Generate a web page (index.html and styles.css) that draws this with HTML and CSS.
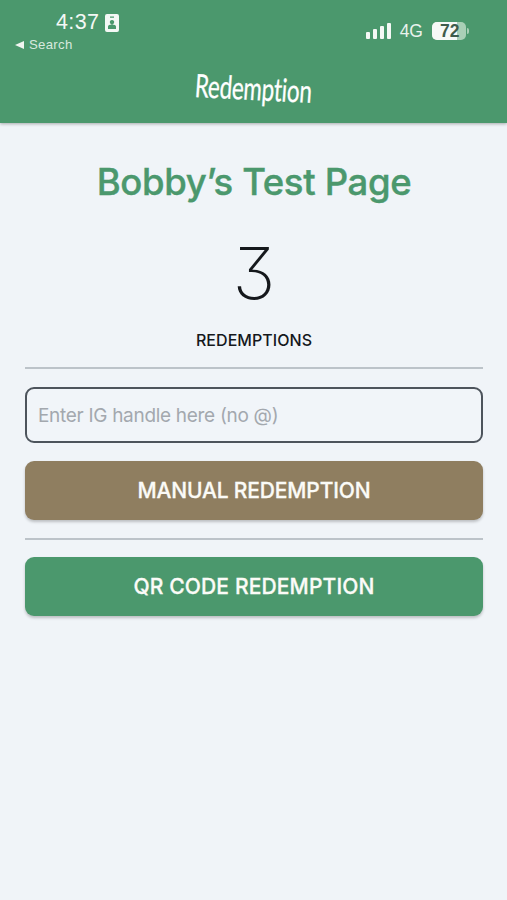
FILE: index.html
```html
<!DOCTYPE html>
<html lang="en">
<head>
<meta charset="utf-8">
<title>Redemption</title>
<link rel="stylesheet" href="styles.css">
</head>
<body>
<header class="header">
  <div class="status">
    <div class="status-left">
      <div class="time-row">
        <span class="time">4:37</span>
        <svg class="id-icon" width="14" height="18" viewBox="0 0 14 18"><path fill-rule="evenodd" fill="#f4f8f5" d="M2 0h10a2 2 0 0 1 2 2v14a2 2 0 0 1-2 2H2a2 2 0 0 1-2-2V2a2 2 0 0 1 2-2zM5 2.500v1.200h4V2.500zM7 6a2.200 2.200 0 1 0 .01 0zM3 15h8v-2.500c0-1.300-1.500-2-4-2s-4 .7-4 2z"/></svg>
      </div>
      <div class="back"><span class="back-arrow"></span><span>Search</span></div>
    </div>
    <div class="status-right">
      <svg class="signal" width="26" height="16" viewBox="0 0 26 16"><rect x="0" y="9" width="4" height="7" rx="1"/><rect x="7" y="6" width="4" height="10" rx="1"/><rect x="14" y="3" width="4" height="13" rx="1"/><rect x="21" y="0" width="4" height="16" rx="1"/></svg>
      <span class="net">4G</span>
      <span class="battery"><span class="battery-fill"></span><span class="battery-num">72</span></span>
      <span class="battery-cap"></span>
    </div>
  </div>
  <h1 class="title">Redemption</h1>
</header>
<main class="content">
  <h2 class="page-name">Bobby’s Test Page</h2>
  <div class="count">3</div>
  <div class="count-label">REDEMPTIONS</div>
  <hr class="rule rule-top">
  <input class="handle" type="text" placeholder="Enter IG handle here (no @)">
  <button class="btn btn-brown">MANUAL REDEMPTION</button>
  <hr class="rule rule-mid">
  <button class="btn btn-green">QR CODE REDEMPTION</button>
</main>
</body>
</html>
```
FILE: styles.css
```css
* { box-sizing: border-box; }
html, body { margin: 0; height: 100%; }
body {
  background: #f0f4f8;
  font-family: Inter, "Liberation Sans", sans-serif;
  color: #15181c;
  overflow: hidden;
}
.header {
  height: 123px;
  background: #4b986d;
  box-shadow: 0 1px 3px rgba(0,0,0,.3);
  padding: 12px 38px 0 15px;
  color: #f4f8f5;
  display: flex;
  flex-direction: column;
}
.status { display: flex; justify-content: space-between; align-items: flex-start; height: 42px; }
.status-left { display: flex; flex-direction: column; }
.time-row { display: flex; align-items: center; gap: 6px; padding-left: 41px; height: 21px; }
.time { font: 500 21.500px/21px "Liberation Sans", sans-serif; letter-spacing: .4px; }
.id-icon { display: block; }
.back { display: flex; align-items: center; gap: 5px; height: 16px; margin-top: 4px; font: 500 13.200px/16px "Liberation Sans", sans-serif; color: #d8e9de; letter-spacing: .3px; }
.back-arrow { width: 0; height: 0; border-style: solid; border-width: 4px 9px 4px 0; border-color: transparent #f0f5f1 transparent transparent; }
.status-right { display: flex; align-items: center; margin-top: 10px; height: 18px; }
.signal { fill: #f4f8f5; display: block; }
.net { font: 400 17.500px/18px "Liberation Sans", sans-serif; margin-left: 8px; color: #e9f2ec; }
.battery { position: relative; display: block; width: 34px; height: 18px; margin-left: 9px; border-radius: 5px; background: #a9cfb6; overflow: hidden; }
.battery-fill { position: absolute; left: 0; top: 0; bottom: 0; width: 25px; background: #f6f9f7; }
.battery-num { position: absolute; left: 8px; top: 0; font: 700 17.500px/18px "Liberation Sans", sans-serif; color: #3e5c4c; }
.battery-cap { width: 2px; height: 6px; margin-left: 1px; border-radius: 0 2px 2px 0; background: #a9cfb6; }
.title {
  margin: 14px 0 0;
  align-self: center;
  transform: translateX(11px) scaleX(.7) rotate(2deg) skewX(-4deg);
  font: 400 32px/40px Lato, sans-serif;
  color: #fff;
  letter-spacing: -.3px;
  -webkit-text-stroke: .3px #fff;
}
.content { padding: 0 24px 0 25px; display: flex; flex-direction: column; }
.page-name {
  margin: 37px 0 0;
  text-align: center;
  font: 500 36.500px/44px Inter, sans-serif;
  letter-spacing: -.35px;
  color: #4b986d;
  -webkit-text-stroke: .4px #4b986d;
}
.count {
  margin-top: 33px;
  height: 72px;
  text-align: center;
  font: 200 72px/72px Inter, sans-serif;
  font-feature-settings: "cv09";
  color: #15181c;
}
.count-label {
  margin-top: 21px;
  text-align: center;
  font: 500 16px/20px Inter, sans-serif;
  letter-spacing: .05px;
}
.rule { width: 100%; height: 2px; margin: 0; border: 0; background: #bcc3c9; }
.rule-top { margin-top: 17px; }
.handle {
  display: block;
  margin-top: 18px;
  width: 100%;
  height: 56px;
  padding: 0 11px;
  border: 2px solid #4d545c;
  border-radius: 9px;
  background: #f1f5f9;
  font: 400 19px/24px Inter, sans-serif;
  letter-spacing: -.3px;
  color: #15181c;
}
.handle::placeholder { color: #a3a8ae; opacity: 1; }
.btn {
  display: block;
  width: 100%;
  height: 59px;
  border: 0;
  border-radius: 9px;
  color: #fbfbf7;
  font: 500 21px/26px Inter, sans-serif;
  letter-spacing: -.15px;
  -webkit-text-stroke: .3px #fbfbf7;
  box-shadow: 0 2px 3px rgba(0,0,0,.22);
}
.btn-brown { margin-top: 18px; background: #8f7e60; }
.btn-green { margin-top: 17px; background: #4b986d; letter-spacing: .15px; }
.rule-mid { margin-top: 18px; }
```
